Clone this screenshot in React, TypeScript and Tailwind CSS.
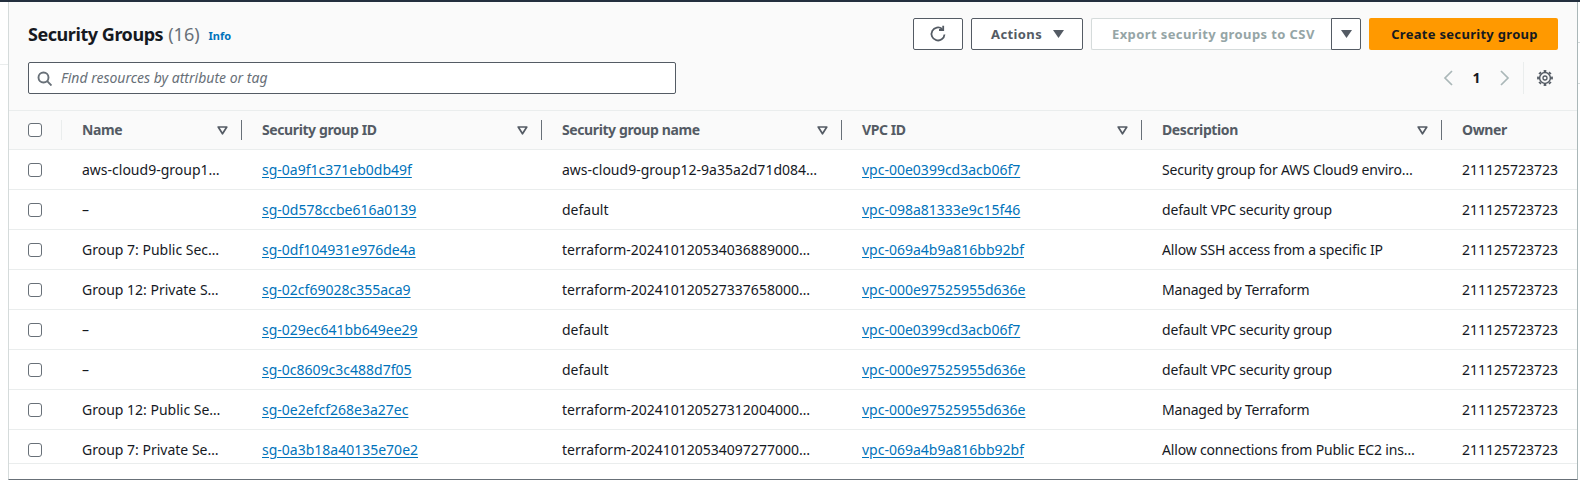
import React from "react";

const rows = [
  ["aws-cloud9-group1…", "sg-0a9f1c371eb0db49f", "aws-cloud9-group12-9a35a2d71d084…", "vpc-00e0399cd3acb06f7", "Security group for AWS Cloud9 enviro…"],
  ["–", "sg-0d578ccbe616a0139", "default", "vpc-098a81333e9c15f46", "default VPC security group"],
  ["Group 7: Public Sec…", "sg-0df104931e976de4a", "terraform-202410120534036889000…", "vpc-069a4b9a816bb92bf", "Allow SSH access from a specific IP"],
  ["Group 12: Private S…", "sg-02cf69028c355aca9", "terraform-202410120527337658000…", "vpc-000e97525955d636e", "Managed by Terraform"],
  ["–", "sg-029ec641bb649ee29", "default", "vpc-00e0399cd3acb06f7", "default VPC security group"],
  ["–", "sg-0c8609c3c488d7f05", "default", "vpc-000e97525955d636e", "default VPC security group"],
  ["Group 12: Public Se…", "sg-0e2efcf268e3a27ec", "terraform-202410120527312004000…", "vpc-000e97525955d636e", "Managed by Terraform"],
  ["Group 7: Private Se…", "sg-0a3b18a40135e70e2", "terraform-202410120534097277000…", "vpc-069a4b9a816bb92bf", "Allow connections from Public EC2 ins…"],
];

const cols = ["Security group ID", "Security group name", "VPC ID", "Description"];

function Box() {
  return <span className="block shrink-0 w-[14px] h-[14px] border border-[#687078] rounded-[3px] bg-white" />;
}

function Filter() {
  return (
    <svg width="11" height="9" viewBox="0 0 11 9" className="shrink-0">
      <path d="M1.2 1h8.600L5.500 7.800z" fill="none" stroke="#545b64" strokeWidth="1.7" strokeLinejoin="round" />
    </svg>
  );
}

function Caret() {
  return (
    <svg width="11" height="8" viewBox="0 0 11 8" className="shrink-0">
      <path d="M0 0h11L5.500 8z" fill="#545b64" />
    </svg>
  );
}

function Head({ label, width }: { label: string; width: string }) {
  return (
    <div className={`${width} shrink-0 flex items-center h-full pl-[20px]`}>
      <span className="font-bold text-[14px] tracking-[-0.4px] text-[#545b64] flex-1">{label}</span>
      <span className="mr-[13px] flex"><Filter /></span>
      <span className="w-px h-5 bg-[#687078]" />
    </div>
  );
}

export default function App() {
  return (
    <div
      className="w-[1580px] h-[481px] overflow-hidden bg-white text-[14px] leading-5 text-[#16191f] flex flex-col"
      style={{ fontFamily: '"Noto Sans", sans-serif' }}
    >
      <div className="h-[2px] bg-[#232f3e] shrink-0" />
      <div className="flex flex-1 min-h-0">
        <div className="w-[8px] shrink-0 pt-[62px]">
          <div className="h-px bg-[#eaeded]" />
        </div>
        <div className="w-[1570px] shrink-0 border-l border-l-[#d5dbdb] border-r border-r-[#aab7b8] border-b border-b-[#687078] h-[478px] flex flex-col">
          <div className="bg-[#fafafa] h-[109px] border-b border-[#eaeded] pl-[19px] pr-[19px] pt-[16px] shrink-0">
            <div className="flex items-center h-[32px]">
              <h1 className="text-[18px] tracking-[-0.45px] font-bold">Security Groups</h1>
              <span className="text-[18px] text-[#687078] ml-[5px]">(16)</span>
              <a className="text-[11px] font-bold text-[#0073bb] ml-[9px] mt-[3px]">Info</a>
              <div className="ml-auto flex items-center h-[32px] gap-[8px] font-bold text-[13px] tracking-[0.4px]">
                <button className="w-[50px] h-[32px] border border-[#545b64] rounded-[2px] bg-white flex items-center justify-center">
                  <svg width="18" height="18" viewBox="0 0 18 18" fill="none" stroke="#545b64" strokeWidth="1.8">
                    <path d="M15.500 9.500a6.500 6.500 0 1 1-2.300-5.500" />
                    <path d="M14.200 0.800v4.200h-4.200" />
                  </svg>
                </button>
                <button className="w-[112px] h-[32px] border border-[#545b64] rounded-[2px] bg-white text-[#545b64] flex items-center pl-[19px] gap-[11px]">
                  Actions <Caret />
                </button>
                <div className="flex">
                  <button className="w-[240px] h-[32px] border border-[#d5dbdb] border-r-0 rounded-l-[2px] bg-white text-[#95a5a6] text-left pl-[20px]">
                    Export security groups to CSV
                  </button>
                  <button className="w-[30px] h-[32px] border border-[#545b64] rounded-r-[2px] bg-white flex items-center justify-center">
                    <Caret />
                  </button>
                </div>
                <button className="w-[189px] h-[32px] pl-[2px] rounded-[2px] bg-[#ff9900] text-[#16191f] tracking-[0.3px]">
                  Create security group
                </button>
              </div>
            </div>
            <div className="flex items-center mt-[12px] h-[32px]">
              <div className="w-[648px] h-[32px] border border-[#545b64] rounded-[2px] bg-white flex items-center pl-[8px]">
                <svg width="15" height="15" viewBox="0 0 15 15" fill="none" stroke="#687078" strokeWidth="1.9">
                  <circle cx="6.500" cy="6.500" r="5" />
                  <path d="M10.200 10.200l4.300 4.300" />
                </svg>
                <span className="italic text-[#687078] ml-[9px]">Find resources by attribute or tag</span>
              </div>
              <div className="ml-auto flex items-center">
                <svg width="10" height="16" viewBox="0 0 10 16" fill="none" stroke="#aab7b8" strokeWidth="1.7"><path d="M9 1L2 8l7 7" /></svg>
                <span className="font-bold w-[47px] text-center text-[14px]">1</span>
                <svg width="10" height="16" viewBox="0 0 10 16" fill="none" stroke="#aab7b8" strokeWidth="1.7"><path d="M1 1l7 7-7 7" /></svg>
                <span className="w-px h-8 bg-[#eaeded] ml-[13px] mr-[13px]" />
                <svg width="16" height="16" viewBox="0 0 16 16" fill="none" stroke="#545b64" className="mr-[5px]">
                  <circle cx="8" cy="8" r="5.400" strokeWidth="1.500" />
                  <circle cx="8" cy="8" r="2" strokeWidth="1.300" />
                  <circle cx="8" cy="8" r="7" strokeWidth="1.800" pathLength="16" strokeDasharray="1 1" strokeDashoffset="0.500" />
                </svg>
              </div>
            </div>
          </div>
          <div className="flex items-center h-[39px] bg-[#fafafa] border-b border-[#eaeded] shrink-0">
            <div className="w-[19px] shrink-0" />
            <Box />
            <span className="w-px h-5 bg-[#eaeded] ml-[19px]" />
            <Head label="Name" width="w-[180px]" />
            {cols.map((c) => (
              <Head key={c} label={c} width="w-[300px]" />
            ))}
            <span className="font-bold text-[14px] tracking-[-0.4px] text-[#545b64] pl-[20px]">Owner</span>
          </div>
          {rows.map((r, i) => (
            <div
              key={i}
              className={`flex shrink-0 border-b border-[#eaeded] ${
                i === rows.length - 1 ? "h-[34px] items-start pt-[10px]" : "h-[40px] items-center"
              }`}
            >
              <div className="w-[19px] shrink-0" />
              <div className={i === rows.length - 1 ? "pt-[3px]" : ""}><Box /></div>
              <div className="w-[40px] shrink-0" />
              <div className="w-[180px] shrink-0">{r[0]}</div>
              <div className="w-[300px] shrink-0"><a className="text-[#0073bb] underline underline-offset-2">{r[1]}</a></div>
              <div className="w-[300px] shrink-0">{r[2]}</div>
              <div className="w-[300px] shrink-0"><a className="text-[#0073bb] underline underline-offset-2">{r[3]}</a></div>
              <div className="w-[300px] shrink-0 tracking-[-0.18px]">{r[4]}</div>
              <div>211125723723</div>
            </div>
          ))}
        </div>
        <div className="w-[2px] shrink-0 pt-[40px]">
          <div className="h-px bg-[#d5dbdb]" />
          <div className="h-px bg-[#d5dbdb] mt-[40px]" />
        </div>
      </div>
    </div>
  );
}
